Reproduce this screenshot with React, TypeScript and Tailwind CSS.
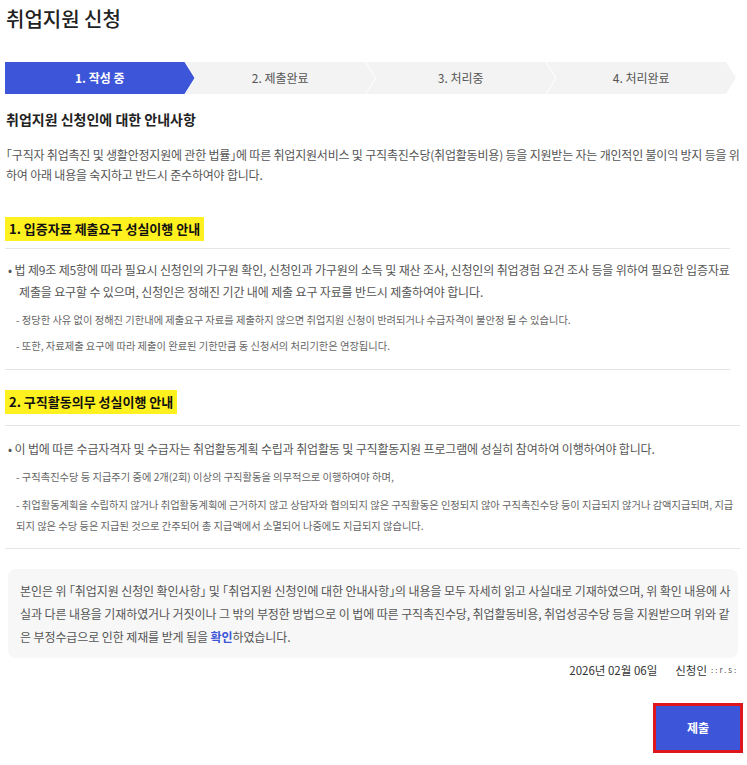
import React from 'react';

const steps = ['1. 작성 중', '2. 제출완료', '3. 처리중', '4. 처리완료'];

const Stepper: React.FC = () => (
    <div className="flex h-[32px] mt-[30px] pr-[6px]">
        {steps.map((s, i) => (
            <div
                key={s}
                className={
                    (i === 0
                        ? 'bg-[#3d55d9] text-white font-bold z-10 [clip-path:polygon(0_0,calc(100%-10px)_0,100%_50%,calc(100%-10px)_100%,0_100%)]'
                        : 'bg-[#f3f3f3] text-[#555] -ml-[9px] [clip-path:polygon(0_0,calc(100%-10px)_0,100%_50%,calc(100%-10px)_100%,0_100%,10px_50%)]') +
                    ' flex-1 flex items-center justify-center text-[12px]'
                }
            >
                {s}
            </div>
        ))}
    </div>
);

const Highlight: React.FC<{ children: React.ReactNode }> = ({ children }) => (
    <div className="inline-block bg-[#fff01f] px-[4px] py-[3px] text-[13px] font-bold text-[#111] leading-[18px]">{children}</div>
);

export default function App() {
    return (
        <div className="bg-white min-h-screen px-[5px] pt-[6px] pb-[8px] font-['Noto_Sans_CJK_KR','Noto_Sans',sans-serif] text-[#444]">
            <h1 className="text-[20px] leading-[26px] font-medium text-[#222] pl-[1px]">취업지원 신청</h1>

            <Stepper />

            <h2 className="mt-[15px] text-[14px] leading-[20px] font-bold text-[#222] pl-[1px]">취업지원 신청인에 대한 안내사항</h2>

            {/* halt = half-width brackets, tighter like the original page font */}
            <p className="mt-[16px] text-[12px] leading-[20px] text-[#555] pl-[1px] pr-[2px] tracking-[-0.2px] [font-feature-settings:'halt']">
                「구직자 취업촉진 및 생활안정지원에 관한 법률」에 따른 취업지원서비스 및 구직촉진수당(취업활동비용) 등을 지원받는 자는 개인적인 불이익 방지 등을 위하여 아래 내용을 숙지하고 반드시 준수하여야 합니다.
            </p>

            <div className="mt-[30px]">
                <Highlight>1. 입증자료 제출요구 성실이행 안내</Highlight>
            </div>
            <div className="mt-[7px] mr-[12px] border-t border-[#e5e5e5] border-b pt-[10px] pb-[13px]">
                <p className="text-[12px] leading-[22px] text-[#555] pl-[14px] -indent-[11px] tracking-[-0.15px]">
                    • 법 제9조 제5항에 따라 필요시 신청인의 가구원 확인, 신청인과 가구원의 소득 및 재산 조사, 신청인의 취업경험 요건 조사 등을 위하여 필요한 입증자료 제출을 요구할 수 있으며, 신청인은 정해진 기간 내에 제출 요구 자료를 반드시 제출하여야 합니다.
                </p>
                <p className="mt-[7px] text-[10.25px] leading-[20px] text-[#666] pl-[11px]">
                    - 정당한 사유 없이 정해진 기한내에 제출요구 자료를 제출하지 않으면 취업지원 신청이 반려되거나 수급자격이 불안정 될 수 있습니다.
                </p>
                <p className="mt-[6px] text-[10.25px] leading-[20px] text-[#666] pl-[11px]">
                    - 또한, 자료제출 요구에 따라 제출이 완료된 기한만큼 동 신청서의 처리기한은 연장됩니다.
                </p>
            </div>

            <div className="mt-[18px]">
                <Highlight>2. 구직활동의무 성실이행 안내</Highlight>
            </div>
            <div className="mt-[11px] mr-[2px] border-t border-[#e5e5e5] border-b pt-[12px] pb-[12px]">
                <p className="text-[12px] leading-[22px] text-[#555] pl-[14px] -indent-[11px] tracking-[-0.15px]">
                    • 이 법에 따른 수급자격자 및 수급자는 취업활동계획 수립과 취업활동 및 구직활동지원 프로그램에 성실히 참여하여 이행하여야 합니다.
                </p>
                <p className="mt-[7px] text-[10.25px] leading-[20px] text-[#666] pl-[11px]">
                    - 구직촉진수당 등 지급주기 중에 2개(2회) 이상의 구직활동을 의무적으로 이행하여야 하며,
                </p>
                <p className="mt-[7px] text-[10.25px] leading-[21px] text-[#666] pl-[11px] pr-[2px]">
                    - 취업활동계획을 수립하지 않거나 취업활동계획에 근거하지 않고 상담자와 협의되지 않은 구직활동은 인정되지 않아 구직촉진수당 등이 지급되지 않거나 감액지급되며, 지급되지 않은 수당 등은 지급된 것으로 간주되어 총 지급액에서 소멸되어 나중에도 지급되지 않습니다.
                </p>
            </div>

            <div className="mt-[20px] ml-[3px] mr-[4px] bg-[#f7f7f7] rounded-[8px] pl-[12px] pr-[6px] py-[10px]">
                <p className="text-[12px] leading-[23px] text-[#555] tracking-[-0.1px] [font-feature-settings:'halt']">
                    본인은 위 「취업지원 신청인 확인사항」 및 「취업지원 신청인에 대한 안내사항」의 내용을 모두 자세히 읽고 사실대로 기재하였으며, 위 확인 내용에 사실과 다른 내용을 기재하였거나 거짓이나 그 밖의 부정한 방법으로 이 법에 따른 구직촉진수당, 취업활동비용, 취업성공수당 등을 지원받으며 위와 같은 부정수급으로 인한 제재를 받게 됨을 <span className="text-[#3d55d9] font-bold">확인</span>하였습니다.
                </p>
            </div>

            <div className="mt-[2px] flex justify-end items-center gap-[18px] pr-[1px] text-[11.5px] text-[#333] leading-[20px]">
                <span>2026년 02월 06일</span>
                <span className="flex items-center gap-[4px]">
                    신청인 <span className="w-[30px] text-[8px] tracking-[2px] text-[#555]">::r.s:</span>
                </span>
            </div>

            <div className="mt-[23px] flex justify-end -mr-[1px]">
                <button className="w-[90px] h-[50px] border-[3px] border-[#e0161f] bg-[#3d55d9] text-white text-[12px] font-bold">
                    제출
                </button>
            </div>
        </div>
    );
}
